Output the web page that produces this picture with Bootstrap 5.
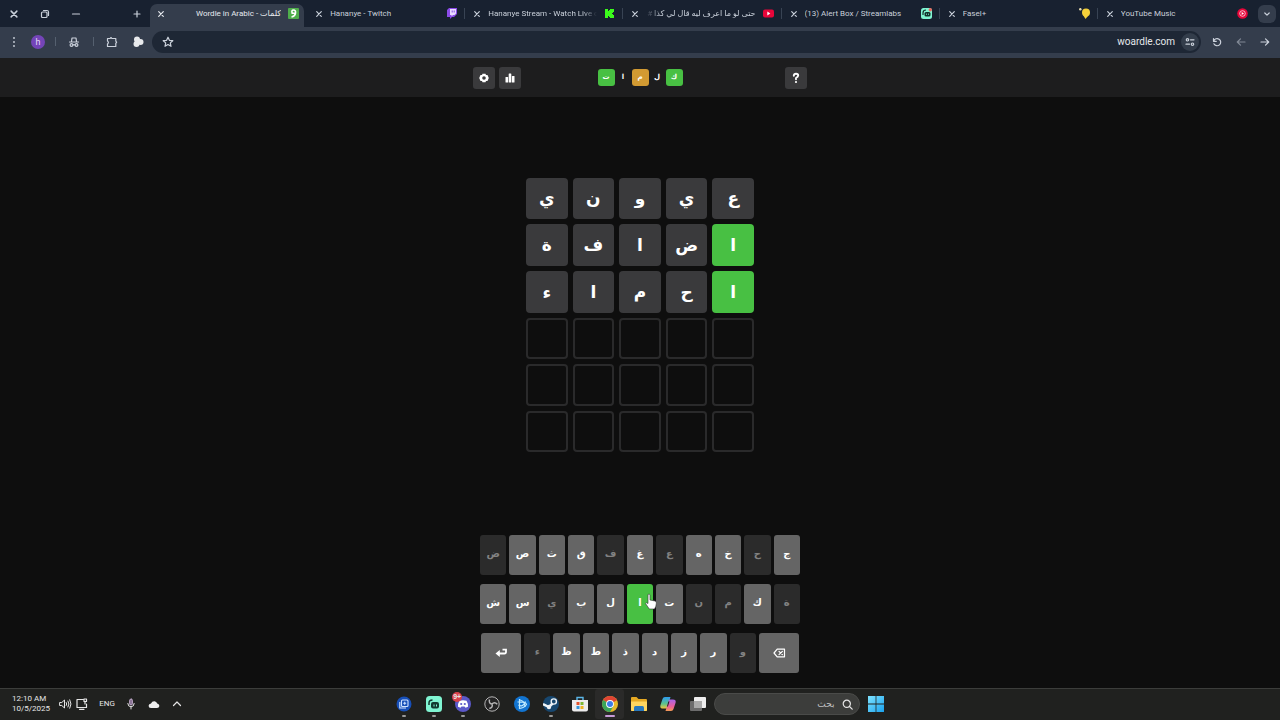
<!DOCTYPE html>
<html lang="ar">
<head>
<meta charset="utf-8">
<meta name="viewport" content="width=device-width, initial-scale=1">
<title>كلمات - Wordle in Arabic</title>
<link href="https://cdn.jsdelivr.net/npm/bootstrap@5.3.0/dist/css/bootstrap.min.css" rel="stylesheet">
<style>
  body { background: #0e0e0e; color: #fff; font-family: Roboto, "DejaVu Sans", sans-serif; font-size: 9px; line-height: 12px; }
  button, input { font: inherit; color: inherit; }
  svg { display: block; flex: none; }
  .plain { background: none; border: 0; padding: 0; display: flex; align-items: center; justify-content: center; flex: none; color: inherit; }
  .stroke { fill: none; stroke: currentColor; stroke-width: 1.2; stroke-linecap: round; stroke-linejoin: round; }

  /* tab strip */
  .strip { background: #182130; height: 27px; color: #c9d0da; }
  .win-side { width: 150px; padding-right: 8px; }
  .win-btn { width: 31px; height: 27px; padding-right: 3px; }
  .tab-item { flex: 1 1 0; min-width: 0; height: 23px; margin-top: 4px; padding: 0 9px 4px 7px; gap: 7px; position: relative; }
  .tab-item + .tab-item:not(.first-off)::before { content: ""; position: absolute; left: -2px; top: 4px; height: 11px; width: 1px; background: #384353; }
  .tab-active { background: #343d4c; border-radius: 7px 7px 0 0; margin-right: 4px; color: #e6e9ee; padding-right: 5px; }
  .tab-title { flex: 1 1 0; min-width: 0; overflow: hidden; white-space: nowrap; color: inherit; text-decoration: none; font-size: 8px; }
  .tab-title:hover { color: #fff; }
  .fade-end { -webkit-mask-image: linear-gradient(to left, transparent, #000 14px); }
  .fade-start { -webkit-mask-image: linear-gradient(to right, transparent, #000 14px); }
  .list-btn { width: 18px; height: 18px; border-radius: 6px; background: #343d4c; margin: 0 4px 0 1px; }

  /* toolbar */
  .toolbar { background: #343d4c; height: 31px; color: #ccd2dc; padding: 0 3px 2px 0; }
  .tool-side { width: 152px; padding-left: 5px; }
  .tool-btn { width: 18px; height: 22px; }
  .avatar { width: 14px; height: 14px; border-radius: 50%; background: #7445b8; color: #e6dcf5; }
  .rule { width: 1px; height: 9px; background: #55606f; margin: 0 9px 0 10px; }
  .omnibox { background: #1e2735; border-radius: 11px; height: 22px; padding: 0 2px 0 10px; }
  .omnibox input { background: none; border: 0; outline: 0; text-align: right; min-width: 0; color: #e4e7ec; padding: 0 6px; font-size: 10px; }
  .site-btn { width: 18px; height: 18px; border-radius: 50%; background: #333d4b; }
  .nav-btn { width: 24px; height: 22px; }

  /* game */
  .game-head { background: #1d1d1e; height: 39px; }
  .head-inner { width: 334px; }
  .head-btn { width: 22px; height: 22px; border-radius: 3px; background: #3a3a3c; }
  .logo { font: 700 7px/17px "DejaVu Sans", sans-serif; margin: 0; }
  .logo span { width: 17px; height: 17px; text-align: center; border-radius: 3px; }
  .bg-hit { background: #48c043; }
  .bg-near { background: #d29a32; }
  .board { width: 228px; display: grid; grid-template-columns: repeat(5, 1fr); gap: 5px; font: 700 17px/24px "DejaVu Sans", sans-serif; margin-bottom: 2px; }
  .tile { aspect-ratio: 1; border-radius: 4px; display: flex; align-items: center; justify-content: center; background: #3a3a3c; }
  .tile.bg-hit { background: #48c043; }
  .tile.blank { background: none; border: 2px solid #2a2a2b; }
  .keyboard { width: 320px; gap: 9px; font: 700 10px/14px "DejaVu Sans", sans-serif; margin-bottom: 15px; }
  .key-row { gap: 3px; }
  .key-row.inset { padding: 0 1px; }
  .key { flex: 1 1 0; height: 40px; border: 0; border-radius: 3px; padding: 0 0 2px; background: #656565; color: #fff; position: relative; display: flex; align-items: center; justify-content: center; }
  .key.out { background: #2b2b2b; color: #828282; }
  .key.bg-hit { background: #48c043; }
  .key.wide { flex: 0 0 40px; padding: 0; }
  .pointer { position: absolute; left: 17px; top: 9px; z-index: 2; }

  /* taskbar */
  .taskbar { background: #20211f; border-top: 1px solid #3c3d3b; height: 32px; padding-bottom: 1px; color: #e6e6e6; font-size: 8px; line-height: 10px; }
  .tray { flex: 1 1 0; padding-left: 12px; }
  .clock { width: 47px; text-align: left; }
  .tray-btn { height: 24px; }
  .tray-lang { width: 38px; }
  .apps { width: 323px; }
  .app-btn { flex: 1 1 0; height: 30px; position: relative; }
  .start-btn { width: 29px; height: 30px; }
  .app-btn.running::after { content: ""; position: absolute; bottom: 2px; width: 4px; height: 2px; border-radius: 1px; background: #999; }
  .app-btn.current { background: #2a2a29; border-radius: 3px; }
  .app-btn.current::after { width: 10px; background: #c79bd8; }
  .count { position: absolute; left: 4px; top: 3px; width: 10px; height: 10px; border-radius: 50%; background: #d8414b; font: 700 7px/10px "Liberation Sans", sans-serif; }
  .search { width: 146px; height: 22px; border-radius: 11px; background: #3c3d3b; border: 1px solid #4a4b49; margin: 0 2px 0 1px; padding-right: 6px; }
  .search input { background: none; border: 0; outline: 0; min-width: 0; padding: 0 7px; font-size: 9px; }
  .search input::placeholder { color: #c0c0c0; opacity: 1; }
</style>
</head>
<body class="d-flex flex-column min-vh-100">

<svg width="0" height="0" class="position-absolute" aria-hidden="true">
  <symbol id="x" viewBox="0 0 8 8"><path class="stroke" d="M1.700 1.700l4.600 4.600M6.300 1.700l-4.600 4.600"/></symbol>
</svg>

<header>
  <div class="strip d-flex align-items-center">
    <div class="win-side d-flex align-items-center">
      <button class="plain win-btn" aria-label="Close window"><svg width="10" height="10"><use href="#x"/></svg></button>
      <button class="plain win-btn" aria-label="Restore"><svg class="stroke" width="10" height="10" viewBox="0 0 10 10"><rect x="1.500" y="3" width="5.500" height="5.500" rx="1"/><path d="M3.500 1.500h3.500q1.500 0 1.500 1.500v3.500"/></svg></button>
      <button class="plain win-btn" aria-label="Minimize"><svg class="stroke" width="10" height="10" viewBox="0 0 10 10"><path d="M1.500 5h7"/></svg></button>
      <button class="plain ms-auto" aria-label="New tab"><svg class="stroke" width="10" height="10" viewBox="0 0 10 10"><path d="M2 5h6M5 2v6"/></svg></button>
    </div>
    <nav class="d-flex flex-fill" aria-label="Tabs">
      <div class="tab-item tab-active d-flex align-items-center">
        <button class="plain" aria-label="Close tab"><svg width="8" height="8"><use href="#x"/></svg></button>
        <a href="#" class="tab-title" dir="rtl">كلمات - Wordle in Arabic</a>
        <svg width="11" height="11" viewBox="0 0 11 11"><rect width="11" height="11" rx="1" fill="#4fae4b"/><path d="M7.500 5.200H4.200Q3.200 2 5.500 2 8 2 7.500 5.200 7 8.500 3.500 9" fill="none" stroke="#fff" stroke-width="1.600"/></svg>
      </div>
      <div class="tab-item first-off d-flex align-items-center">
        <button class="plain" aria-label="Close tab"><svg width="8" height="8"><use href="#x"/></svg></button>
        <a href="#" class="tab-title">Hananye - Twitch</a>
        <svg width="11" height="11" viewBox="0 0 11 11"><path d="M3 0h8v6L8 9H6l-2 2V9H1V2z" fill="#8b4be8"/><path d="M4 1h6v4.500L8.500 7H7L5.500 8.500V7H4z" fill="#e9dcff"/><path d="M6.200 2.500v2M8.200 2.500v2" stroke="#8b4be8"/></svg>
      </div>
      <div class="tab-item d-flex align-items-center">
        <button class="plain" aria-label="Close tab"><svg width="8" height="8"><use href="#x"/></svg></button>
        <a href="#" class="tab-title fade-end">Hananye Stream - Watch Live o</a>
        <svg width="11" height="11" viewBox="0 0 11 11"><path d="M1 1h3v2h1V2h1V1h4v3H9v1H8v1h1v1h1v3H6V9H5V8H4v2H1z" fill="#3bfb1c"/></svg>
      </div>
      <div class="tab-item d-flex align-items-center">
        <button class="plain" aria-label="Close tab"><svg width="8" height="8"><use href="#x"/></svg></button>
        <a href="#" class="tab-title fade-start" dir="rtl">حتى لو ما اعرف ليه قال لي كذا #</a>
        <svg width="11" height="11" viewBox="0 0 11 11"><rect y="1.500" width="11" height="8" rx="2" fill="#e8063a"/><path d="M4.300 3.600v3.800l3-1.900z" fill="#fff"/></svg>
      </div>
      <div class="tab-item d-flex align-items-center">
        <button class="plain" aria-label="Close tab"><svg width="8" height="8"><use href="#x"/></svg></button>
        <a href="#" class="tab-title">(13) Alert Box / Streamlabs</a>
        <svg width="11" height="11" viewBox="0 0 11 11"><rect width="11" height="11" rx="2.500" fill="#80f5d2"/><path d="M2 7V5q0-3 3-3" fill="none" stroke="#12322b" stroke-width="1.200"/><rect x="3.500" y="4" width="6" height="4.500" rx="1.500" fill="#12322b"/><path d="M5.500 5.500v1.500M7.500 5.500v1.500" stroke="#80f5d2" stroke-width=".7"/><circle cx="9.300" cy="1.700" r="1.700" fill="#e86b5f"/></svg>
      </div>
      <div class="tab-item d-flex align-items-center">
        <button class="plain" aria-label="Close tab"><svg width="8" height="8"><use href="#x"/></svg></button>
        <a href="#" class="tab-title">Fasel+</a>
        <svg width="11" height="11" viewBox="0 0 11 11"><circle cx="7" cy="4.500" r="4" fill="#f4d03a"/><path d="M4 7l5 1-2.500 3z" fill="#f4d03a"/><circle cx="1.300" cy="1.300" r="1.200" fill="#e9ddb0"/></svg>
      </div>
      <div class="tab-item d-flex align-items-center">
        <button class="plain" aria-label="Close tab"><svg width="8" height="8"><use href="#x"/></svg></button>
        <a href="#" class="tab-title">YouTube Music</a>
        <svg width="11" height="11" viewBox="0 0 11 11"><circle cx="5.500" cy="5.500" r="5.300" fill="#e8063a"/><circle cx="5.500" cy="5.500" r="2.800" fill="none" stroke="#fff" stroke-width=".7"/><path d="M4.700 4v3l2.300-1.500z" fill="#fff"/></svg>
      </div>
    </nav>
    <button class="plain list-btn" aria-label="Search tabs"><svg class="stroke" width="8" height="8" viewBox="0 0 8 8"><path d="M1.800 3L4 5.200 6.200 3"/></svg></button>
  </div>

  <div class="toolbar d-flex align-items-center">
    <div class="tool-side d-flex align-items-center">
      <button class="plain tool-btn" aria-label="Menu"><svg width="10" height="12" viewBox="0 0 10 12" fill="currentColor"><circle cx="5" cy="2" r=".9"/><circle cx="5" cy="6" r=".9"/><circle cx="5" cy="10" r=".9"/></svg></button>
      <button class="plain avatar ms-2" aria-label="Profile">h</button>
      <span class="rule"></span>
      <button class="plain tool-btn" aria-label="Incognito"><svg class="stroke" width="12" height="12" viewBox="0 0 12 12"><path d="M1.500 6h9M3.500 5.500l.5-3.500h4l.5 3.500M5 9q1-.7 2 0"/><circle cx="3.500" cy="9" r="1.400"/><circle cx="8.500" cy="9" r="1.400"/></svg></button>
      <span class="rule"></span>
      <button class="plain tool-btn" aria-label="Extensions"><svg class="stroke" width="12" height="12" viewBox="0 0 12 12"><path d="M1.500 2.500h2.700q.8-1.600 1.600 0h4v2.800q1.700.9 0 1.800v3.400h-8.300V8q1.800-1.500 0-3z"/></svg></button>
      <button class="plain ms-2 ps-1" aria-label="Extension"><svg width="11" height="12" viewBox="0 0 11 12" fill="#e8eaec"><circle cx="4" cy="3.500" r="3"/><circle cx="3.500" cy="8" r="3"/><circle cx="7.500" cy="6" r="3"/></svg></button>
    </div>
    <div class="omnibox d-flex align-items-center flex-fill">
      <button class="plain" aria-label="Bookmark"><svg class="stroke" width="12" height="12" viewBox="0 0 12 12"><path d="M6 1.200l1.400 3.100 3.400.4-2.500 2.200.7 3.400-3-1.800-3 1.800.7-3.400L1.200 4.700l3.400-.4z"/></svg></button>
      <input class="flex-fill" type="text" value="woardle.com" aria-label="Address">
      <button class="plain site-btn" aria-label="Site information"><svg class="stroke" width="10" height="10" viewBox="0 0 10 10"><circle cx="2.500" cy="2.800" r="1.200"/><path d="M5.500 2.800h3.500M1 7.200h3.500"/><circle cx="7.500" cy="7.200" r="1.200"/></svg></button>
    </div>
    <button class="plain nav-btn ms-1" aria-label="Reload"><svg class="stroke" width="10" height="10" viewBox="0 0 10 10"><path d="M1.500 1.500v2.800h2.800M1.700 4a3.600 3.600 0 1 1 .2 2.800"/></svg></button>
    <button class="plain nav-btn opacity-50" aria-label="Forward"><svg class="stroke" width="10" height="10" viewBox="0 0 10 10"><path d="M9 5H1.500M4.500 1.800L1.300 5l3.200 3.200"/></svg></button>
    <button class="plain nav-btn" aria-label="Back"><svg class="stroke" width="10" height="10" viewBox="0 0 10 10"><path d="M1 5h7.500M5.500 1.800L8.700 5 5.500 8.200"/></svg></button>
  </div>
</header>

<main class="flex-fill d-flex flex-column">
  <div class="game-head d-flex justify-content-center align-items-center">
    <div class="head-inner row g-0 align-items-center">
      <div class="col d-flex gap-1">
        <button class="plain head-btn" aria-label="Settings"><svg width="10" height="10" viewBox="0 0 10 10"><path d="M3.500.8h3L7 1.900l1.500.2L9.800 5 8.500 7.900 7 8.100l-.5 1.100h-3L3 8.100l-1.500-.2L.2 5l1.300-2.900L3 1.900zM5 3.200a1.800 1.800 0 1 0 0 3.600 1.800 1.800 0 0 0 0-3.600z" fill="#fff" fill-rule="evenodd"/></svg></button>
        <button class="plain head-btn" aria-label="Statistics"><svg width="10" height="10" viewBox="0 0 10 10" fill="#fff"><rect x=".5" y="4" width="2.600" height="5.500" rx=".5"/><rect x="3.700" y=".5" width="2.600" height="9" rx=".5"/><rect x="6.900" y="3" width="2.600" height="6.500" rx=".5"/></svg></button>
      </div>
      <h1 class="logo col-auto d-flex" dir="rtl"><span class="bg-hit">ك</span><span>ل</span><span class="bg-near">م</span><span>ا</span><span class="bg-hit">ت</span></h1>
      <div class="col d-flex justify-content-end">
        <button class="plain head-btn" aria-label="Help"><svg class="stroke" width="10" height="12" viewBox="0 0 10 12"><path stroke-width="1.900" d="M2.800 3.800Q2.800 1.800 5 1.800t2.200 1.800Q7.200 5 5 6v1.200"/><circle cx="5" cy="10" r=".5"/></svg></button>
      </div>
    </div>
  </div>

  <div class="flex-fill d-flex justify-content-center align-items-center">
    <div class="board" dir="rtl">
      <div class="tile">ع</div><div class="tile">ي</div><div class="tile">و</div><div class="tile">ن</div><div class="tile">ي</div>
      <div class="tile bg-hit">ا</div><div class="tile">ض</div><div class="tile">ا</div><div class="tile">ف</div><div class="tile">ة</div>
      <div class="tile bg-hit">ا</div><div class="tile">ح</div><div class="tile">م</div><div class="tile">ا</div><div class="tile">ء</div>
      <div class="tile blank"></div><div class="tile blank"></div><div class="tile blank"></div><div class="tile blank"></div><div class="tile blank"></div>
      <div class="tile blank"></div><div class="tile blank"></div><div class="tile blank"></div><div class="tile blank"></div><div class="tile blank"></div>
      <div class="tile blank"></div><div class="tile blank"></div><div class="tile blank"></div><div class="tile blank"></div><div class="tile blank"></div>
    </div>
  </div>

  <div class="keyboard d-flex flex-column mx-auto">
    <div class="key-row d-flex">
      <button class="key out">ض</button><button class="key">ص</button><button class="key">ث</button><button class="key">ق</button><button class="key out">ف</button><button class="key">غ</button><button class="key out">ع</button><button class="key">ه</button><button class="key">خ</button><button class="key out">ح</button><button class="key">ج</button>
    </div>
    <div class="key-row d-flex">
      <button class="key">ش</button><button class="key">س</button><button class="key out">ي</button><button class="key">ب</button><button class="key">ل</button><button class="key bg-hit">ا<svg class="pointer" width="14" height="17" viewBox="0 0 14 17"><path d="M4 1.500q1.200-1 2 .3V7l5 1q1.500.5 1.400 2l-.6 3.500-1.300 2.500H5.300L1.500 10.500q.2-1.500 2.500 0z" fill="#fff" stroke="#333" stroke-width=".6"/></svg></button><button class="key">ت</button><button class="key out">ن</button><button class="key out">م</button><button class="key">ك</button><button class="key out">ة</button>
    </div>
    <div class="key-row inset d-flex">
      <button class="key wide" aria-label="Enter"><svg width="13" height="10" viewBox="0 0 13 10"><path d="M7.500 1.700H11v2.300q0 1.500-1.500 1.500H3" fill="none" stroke="#fff" stroke-width="1.800"/><path d="M4.800 2v7L.5 5.500z" fill="#fff"/></svg></button><button class="key out">ء</button><button class="key">ظ</button><button class="key">ط</button><button class="key">ذ</button><button class="key">د</button><button class="key">ز</button><button class="key">ر</button><button class="key out">و</button><button class="key wide" aria-label="Delete"><svg class="stroke" width="13" height="10" viewBox="0 0 13 10"><path d="M4.200 1.200H11.500v7.600H4.200L1 5z"/><path d="M6 3.300l3.400 3.400M9.400 3.300L6 6.700"/></svg></button>
    </div>
  </div>
</main>

<footer class="taskbar d-flex align-items-center">
  <div class="tray d-flex align-items-center">
    <button class="plain clock d-block">12:10 AM<br>10/5/2025</button>
    <button class="plain tray-btn gap-1" aria-label="Volume and network">
      <svg class="stroke" width="13" height="12" viewBox="0 0 13 12"><path stroke-width="1" d="M1 4.500h1.800L5.500 2v8L2.800 7.500H1zM7.300 4.500q1 1.500 0 3M9 3q2 3 0 6M10.800 1.800q2.500 4.200 0 8.400"/></svg>
      <svg class="stroke" width="12" height="12" viewBox="0 0 12 12"><path d="M7 1.500H1v8h9.500V6M3.500 11.300h4.500M9 4v2M8 1h2.500v2.500H8z"/></svg>
    </button>
    <button class="plain tray-btn tray-lang">ENG</button>
    <button class="plain tray-btn" aria-label="Microphone"><svg class="stroke" width="10" height="12" viewBox="0 0 10 12"><rect x="3.500" y="1" width="3" height="6" rx="1.500" fill="#8d7698" stroke="#c9b3d3" stroke-width=".8"/><path stroke-width="1" d="M1.800 5.500Q2 8.800 5 8.800t3.200-3.300M5 9v2"/></svg></button>
    <button class="plain tray-btn ms-2 me-1 px-1" aria-label="Cloud"><svg width="12" height="9" viewBox="0 0 12 9"><path d="M3 8Q.5 8 .6 5.800.8 3.800 3 3.600 4 1 6.500 1.200q2 .2 2.700 2.300Q11.500 4 11.400 6q-.3 2-2.400 2z" fill="#eee"/></svg></button>
    <button class="plain tray-btn ms-1" aria-label="Hidden icons"><svg class="stroke" width="10" height="8" viewBox="0 0 10 8"><path d="M1.500 5.500L5 2l3.500 3.500"/></svg></button>
  </div>
  <div class="d-flex align-items-center">
    <div class="apps d-flex">
      <button class="plain app-btn running" aria-label="Capture"><svg width="16" height="16" viewBox="0 0 16 16"><circle cx="8" cy="8" r="7.500" fill="#174fb8"/><g fill="none" stroke="#cfe2ff" stroke-width="1.100"><rect x="5.500" y="4" width="6.500" height="6.500" rx="1"/><path d="M3.800 6v6H10M7.200 7.200h3M8.700 5.700v3"/></g></svg></button>
      <button class="plain app-btn running" aria-label="Streamlabs"><svg width="16" height="16" viewBox="0 0 16 16"><rect width="16" height="16" rx="3.500" fill="#80f5d2"/><path d="M3 9V7q0-3 3.500-3" fill="none" stroke="#123a30" stroke-width="1.500"/><rect x="5" y="6" width="8" height="6.500" rx="2" fill="#123a30"/><path d="M8 8.500v2M10.500 8.500v2" stroke="#80f5d2"/></svg></button>
      <button class="plain app-btn running" aria-label="Discord"><svg width="16" height="16" viewBox="0 0 16 16"><circle cx="8" cy="8" r="8" fill="#5b58c8"/><path d="M4.500 4.800Q8 3.500 11.500 4.800 13.500 8 13 10.800l-2.500 1-1-1.300h-3l-1 1.300-2.500-1Q2.500 8 4.500 4.800z" fill="#fff"/><circle cx="6.200" cy="8" r="1.100" fill="#5b58c8"/><circle cx="9.800" cy="8" r="1.100" fill="#5b58c8"/></svg><span class="count">9+</span></button>
      <button class="plain app-btn" aria-label="OBS"><svg width="16" height="16" viewBox="0 0 16 16"><circle cx="8" cy="8" r="7.200" fill="#242424" stroke="#b5b5b5"/><path d="M8 8Q4.500 7.500 5.500 3.500M8 8q2.300-2.800 5.300.2M8 8q1.300 3.500-2.700 4.500" fill="none" stroke="#b5b5b5" stroke-width="1.500"/></svg></button>
      <button class="plain app-btn" aria-label="Battle.net"><svg width="16" height="16" viewBox="0 0 16 16"><circle cx="8" cy="8" r="8" fill="#1274d0"/><g fill="none" stroke="#bfeaff" stroke-width="1.200"><path d="M5.500 3v9.500Q10 12 12.500 8.500 12 5.500 3.500 6"/><path d="M4.500 9q4 3 7-3.500M6 4q5 1 5 7"/></g></svg></button>
      <button class="plain app-btn running" aria-label="Steam"><svg width="16" height="16" viewBox="0 0 16 16"><circle cx="8" cy="8" r="8" fill="#17476f"/><path d="M0 8l6 3 4-4" fill="none" stroke="#eef3f7" stroke-width="2.500"/><circle cx="10.800" cy="5.500" r="2.600" fill="#17476f" stroke="#eef3f7" stroke-width="1.400"/><circle cx="6" cy="11" r="2.200" fill="#eef3f7"/></svg></button>
      <button class="plain app-btn" aria-label="Store"><svg width="16" height="16" viewBox="0 0 16 16"><path d="M5 4V1.500h6V4" fill="none" stroke="#5bb7e8" stroke-width="1.400"/><path d="M0 4h16v9.500q0 2-2 2H2q-2 0-2-2z" fill="#ececec"/><path d="M4.500 6H7.500v3h-3z" fill="#e3532d"/><path d="M8.500 6h3v3h-3z" fill="#7eb832"/><path d="M4.500 10h3v3h-3z" fill="#3596dc"/><path d="M8.500 10h3v3h-3z" fill="#eeb323"/></svg></button>
      <button class="plain app-btn running current" aria-label="Chrome"><svg width="16" height="16" viewBox="0 0 16 16"><circle cx="8" cy="8" r="8" fill="#e7b92a"/><path d="M8 8L1.100 4A8 8 0 0 1 14.900 4z" fill="#df4434"/><path d="M8 8L1.100 4A8 8 0 0 0 8 16l3.500-6z" fill="#3ba55a"/><path d="M8 4h6.900L8 8z" fill="#df4434"/><circle cx="8" cy="8" r="3.900" fill="#fff"/><circle cx="8" cy="8" r="3" fill="#3c7de8"/></svg></button>
      <button class="plain app-btn" aria-label="Files"><svg width="16" height="16" viewBox="0 0 16 16"><path d="M0 2q0-1 1-1h4.500l2 2H15q1 0 1 1v10q0 1-1 1H1q-1 0-1-1z" fill="#e5a923"/><path d="M0 5.500h16V14q0 1-1 1H1q-1 0-1-1z" fill="#ffd660"/><path d="M3 15v-3.500q0-1.500 1.500-1.500h7q1.500 0 1.500 1.500V15z" fill="#2878bd"/></svg></button>
      <button class="plain app-btn" aria-label="Copilot"><svg width="16" height="16" viewBox="0 0 16 16"><defs><linearGradient id="ca" x2="0" y2="1"><stop stop-color="#2d9cf0"/><stop offset=".6" stop-color="#5ec38a"/><stop offset="1" stop-color="#f1c43c"/></linearGradient><linearGradient id="cb" x2="0" y2="1"><stop stop-color="#a765ea"/><stop offset=".6" stop-color="#ea5f9c"/><stop offset="1" stop-color="#f39a52"/></linearGradient></defs><path d="M5 1h5.500L7 12.500H3Q-.5 12.500.5 9L2.500 3Q3 1 5 1z" fill="url(#ca)"/><path d="M11 15H5.500L9 3.500h4q3.500 0 2.500 3.500l-2 6q-.5 2-2.500 2z" fill="url(#cb)"/><path d="M8.300 5.500L7 10.500h.9L9.500 5.500z" fill="#20211f"/></svg></button>
      <button class="plain app-btn" aria-label="Task view"><svg width="16" height="16" viewBox="0 0 16 16"><rect y="5" width="12" height="10" rx="1" fill="#6c6c6c"/><rect x="4" y="1" width="12" height="11" rx="1" fill="#eee"/><path d="M4 5h8v7H4z" fill="#aaa"/></svg></button>
    </div>
    <div class="search d-flex align-items-center">
      <input class="flex-fill" dir="rtl" type="text" placeholder="بحث" aria-label="بحث">
      <svg class="stroke" width="11" height="11" viewBox="0 0 11 11"><circle cx="4.800" cy="4.800" r="3.600"/><path d="M7.500 7.500l2.700 2.700"/></svg>
    </div>
    <button class="plain start-btn" aria-label="Start"><svg width="16" height="16" viewBox="0 0 16 16"><defs><linearGradient id="wg" x2="1" y2="1"><stop stop-color="#7fe3ff"/><stop offset="1" stop-color="#1aa2ee"/></linearGradient></defs><path d="M0 0h7.600v7.600H0zM8.400 0H16v7.600H8.400zM0 8.400h7.600V16H0zM8.400 8.400H16V16H8.400z" fill="url(#wg)"/></svg></button>
  </div>
  <div class="tray"></div>
</footer>

<script src="https://cdn.jsdelivr.net/npm/bootstrap@5.3.0/dist/js/bootstrap.bundle.min.js"></script>
</body>
</html>
